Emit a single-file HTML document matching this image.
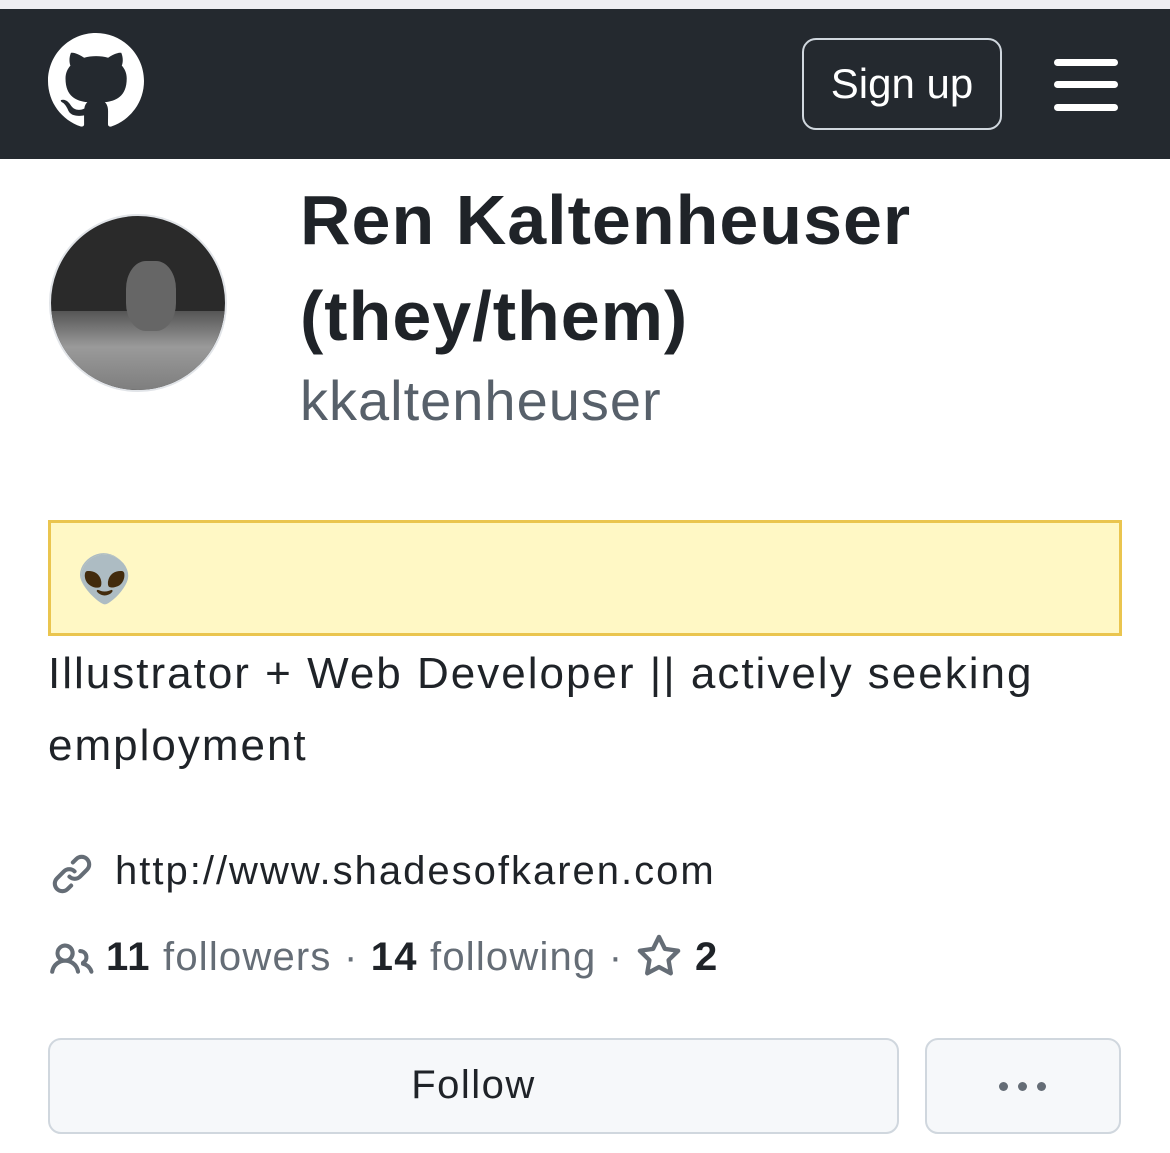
<!DOCTYPE html>
<html><head><meta charset="utf-8"><style>
*{margin:0;padding:0;box-sizing:border-box}
body{width:1170px;height:1153px;background:#fff;font-family:"Liberation Sans",sans-serif;color:#1f2328;position:relative;overflow:hidden}
.abs{position:absolute}
</style></head><body>
<div class="abs" style="left:0;top:0;width:1170px;height:9px;background:#eeeef2"></div>
<div class="abs" style="left:0;top:9px;width:1170px;height:150px;background:#24292f"></div>
<svg class="abs" style="left:48px;top:33px" width="96" height="96" viewBox="0 0 16 16"><path fill="#fff" d="M8 0C3.58 0 0 3.58 0 8c0 3.54 2.290 6.530 5.470 7.590.4.07.55-.17.55-.38 0-.19-.01-.82-.01-1.49-2.01.37-2.53-.49-2.69-.94-.09-.23-.48-.94-.82-1.13-.28-.15-.68-.52-.01-.53.63-.01 1.08.58 1.23.82.72 1.21 1.87.87 2.33.66.07-.52.28-.87.51-1.070-1.78-.2-3.64-.89-3.64-3.95 0-.87.31-1.59.82-2.15-.08-.2-.36-1.02.08-2.12 0 0 .67-.21 2.2.82.64-.18 1.32-.27 2-.27.68 0 1.36.09 2 .27 1.53-1.04 2.2-.82 2.2-.82.44 1.1.16 1.92.08 2.12.51.56.82 1.27.82 2.15 0 3.07-1.87 3.75-3.65 3.95.29.25.54.73.54 1.48 0 1.07-.01 1.93-.01 2.2 0 .21.15.46.55.38A8.013 8.013 0 0016 8c0-4.42-3.58-8-8-8z"/></svg>
<div class="abs" style="left:802px;top:38px;width:200px;height:92px;border:2.5px solid #d0d7de;border-radius:14px;color:#fff;font-size:42px;line-height:87px;text-align:center">Sign up</div>
<div class="abs" style="left:1054px;top:59px;width:64px;height:7px;background:#fff;border-radius:4px"></div>
<div class="abs" style="left:1054px;top:81px;width:64px;height:7px;background:#fff;border-radius:4px"></div>
<div class="abs" style="left:1054px;top:104px;width:64px;height:7px;background:#fff;border-radius:4px"></div>
<div class="abs" style="left:49px;top:214px;width:178px;height:178px;border-radius:50%;border:2px solid #e1e4e8;background:#2a2a2a;overflow:hidden">
<div style="position:absolute;left:0;top:95px;width:178px;height:90px;background:linear-gradient(#555,#9a9a9a 40%,#777)"></div>
<div style="position:absolute;left:75px;top:45px;width:50px;height:70px;border-radius:40%;background:#666"></div>
</div>
<div class="abs" style="left:300px;top:172px;font-size:70px;font-weight:bold;line-height:96px;letter-spacing:1px;white-space:nowrap">Ren Kaltenheuser<br>(they/them)</div>
<div class="abs" style="left:300px;top:368px;font-size:56px;color:#57606a;line-height:66px;letter-spacing:1px">kkaltenheuser</div>
<div class="abs" style="left:48px;top:520px;width:1074px;height:116px;background:#fff8c5;border:3px solid #eac54f"></div>
<div class="abs" style="left:76px;top:555px;font-size:46px;line-height:50px;font-family:'Noto Color Emoji','DejaVu Sans',sans-serif">👽</div>
<div class="abs" style="left:48px;top:638px;font-size:44px;line-height:72px;letter-spacing:2px;white-space:nowrap">Illustrator + Web Developer || actively seeking<br>employment</div>
<svg class="abs" style="left:50px;top:852px" width="44" height="44" viewBox="0 0 16 16"><path fill="#656d76" d="M7.775 3.275a.75.75 0 001.06 1.06l1.25-1.25a2 2 0 112.83 2.830l-2.5 2.5a2 2 0 01-2.83 0 .75.75 0 00-1.06 1.06 3.5 3.5 0 004.95 0l2.5-2.5a3.5 3.5 0 00-4.95-4.95l-1.25 1.25zm-4.69 9.64a2 2 0 010-2.83l2.5-2.5a2 2 0 012.83 0 .75.75 0 001.06-1.06 3.5 3.5 0 00-4.95 0l-2.5 2.5a3.5 3.5 0 004.95 4.95l1.25-1.25a.75.75 0 00-1.06-1.06l-1.25 1.25a2 2 0 01-2.83 0z"/></svg>
<div class="abs" style="left:115px;top:846px;font-size:40px;line-height:50px;letter-spacing:2px;white-space:nowrap">http://www.shadesofkaren.com</div>
<svg class="abs" style="left:48px;top:938px" width="48" height="44" viewBox="0 0 16 16"><path fill="#656d76" d="M2 5.5a3.5 3.5 0 115.898 2.549 5.507 5.507 0 013.034 4.084.75.75 0 11-1.482.235 4.001 4.001 0 00-7.9 0 .75.75 0 01-1.482-.236A5.507 5.507 0 013.102 8.05 3.49 3.49 0 012 5.5zM11 4a3.001 3.001 0 012.22 5.018 5.01 5.01 0 012.56 3.012.749.749 0 01-.885.954.752.752 0 01-.549-.514 3.507 3.507 0 00-2.522-2.372.75.75 0 01-.574-.73v-.352a.75.75 0 01.416-.672A1.5 1.5 0 0011 5.5.75.75 0 0111 4zm-5.5-.5a2 2 0 10-.001 3.999A2 2 0 005.5 3.5z"/></svg>
<div class="abs" style="left:106px;top:932px;font-size:40px;line-height:50px;color:#656d76;white-space:nowrap;letter-spacing:1.2px"><b style="color:#1f2328">11</b> followers · <b style="color:#1f2328">14</b> following ·</div>
<svg class="abs" style="left:636px;top:934px" width="46" height="46" viewBox="0 0 16 16"><path fill="#656d76" d="M8 .25a.75.75 0 01.673.418l1.882 3.815 4.21.612a.75.75 0 01.416 1.279l-3.046 2.97.719 4.192a.751.751 0 01-1.088.791L8 12.347l-3.766 1.98a.75.75 0 01-1.088-.79l.72-4.194L.818 6.374a.75.75 0 01.416-1.28l4.21-.611L7.327.668A.75.75 0 018 .25zm0 2.445L6.615 5.5a.75.75 0 01-.564.41l-3.097.45 2.240 2.184a.75.75 0 01.216.664l-.528 3.084 2.769-1.456a.75.75 0 01.698 0l2.77 1.456-.53-3.084a.75.75 0 01.216-.664l2.24-2.183-3.096-.45a.75.75 0 01-.564-.41L8 2.694z"/></svg>
<div class="abs" style="left:695px;top:932px;font-size:40px;line-height:50px;font-weight:bold">2</div>
<div class="abs" style="left:48px;top:1038px;width:851px;height:96px;background:#f6f8fa;border:2.5px solid #d0d7de;border-radius:13px;font-size:40px;letter-spacing:1.5px;text-align:center;line-height:91px">Follow</div>
<div class="abs" style="left:925px;top:1038px;width:196px;height:96px;background:#f6f8fa;border:2.5px solid #d0d7de;border-radius:13px"></div>
<div class="abs" style="left:999px;top:1082px;width:9px;height:9px;border-radius:50%;background:#656d76"></div>
<div class="abs" style="left:1018px;top:1082px;width:9px;height:9px;border-radius:50%;background:#656d76"></div>
<div class="abs" style="left:1037px;top:1082px;width:9px;height:9px;border-radius:50%;background:#656d76"></div>
</body></html>
